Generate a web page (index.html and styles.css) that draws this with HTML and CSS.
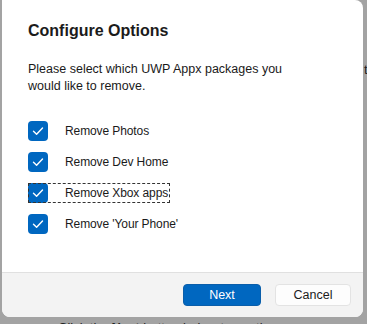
FILE: index.html
```html
<!DOCTYPE html>
<html lang="en">
  <head>
    <meta charset="UTF-8" />
    <meta name="viewport" content="width=device-width, initial-scale=1.0" />
    <title>Configure Options</title>
    <link rel="stylesheet" href="styles.css">
  </head>
  <body>
    <span class="behind-t">t</span>

    <div class="dialog">
      <div class="dialog-body">
        <h1>Configure Options</h1>
        <p class="intro">Please select which UWP Appx packages you would like to remove.</p>

        <ul class="options">
          <li class="option">
            <span class="check"><svg viewBox="0 0 20 20"><path d="M5.5 10.3 L8.6 13.3 L14.5 7" /></svg></span>
            <span class="label">Remove Photos</span>
          </li>
          <li class="option">
            <span class="check"><svg viewBox="0 0 20 20"><path d="M5.5 10.3 L8.6 13.3 L14.5 7" /></svg></span>
            <span class="label">Remove Dev Home</span>
          </li>
          <li class="option focused">
            <span class="check"><svg viewBox="0 0 20 20"><path d="M5.5 10.3 L8.6 13.3 L14.5 7" /></svg></span>
            <span class="label">Remove Xbox apps</span>
          </li>
          <li class="option">
            <span class="check"><svg viewBox="0 0 20 20"><path d="M5.5 10.3 L8.6 13.3 L14.5 7" /></svg></span>
            <span class="label">Remove 'Your Phone'</span>
          </li>
        </ul>
      </div>

      <div class="dialog-footer">
        <button class="btn btn-primary">Next</button>
        <button class="btn btn-secondary">Cancel</button>
      </div>
    </div>

    <p class="behind-text">Click the <b>Next</b> button below to continue</p>
  </body>
</html>
```

FILE: styles.css
```css
body {
  margin: 0;
  padding: 0;
  background: #a3a3a3;
  font-family: "Liberation Sans", Arial, sans-serif;
  color: #1a1a1a;
  overflow: hidden;
  position: relative;
  height: 324px;
}

.dialog {
  margin-left: 2px;
  width: 361px;
  height: 317px;
  background: #fff;
  border-radius: 0 8px 8px 8px;
  display: flex;
  flex-direction: column;
  overflow: hidden;
  position: relative;
  z-index: 1;
}

.dialog-body {
  flex: 1;
  padding: 19px 26px 0 26px;
}

.dialog-body h1 {
  margin: 0;
  font-size: 16px;
  line-height: 24px;
  font-weight: 700;
  color: #1b1b1b;
}

.intro {
  margin: 18px 0 26px 0;
  font-size: 12.5px;
  line-height: 17px;
  width: 275px;
}

.options {
  list-style: none;
  margin: 0;
  padding: 0;
  display: flex;
  flex-direction: column;
  gap: 11px;
}

.option {
  display: flex;
  align-items: center;
  gap: 17px;
  font-size: 12px;
  letter-spacing: -0.1px;
  height: 20px;
  width: max-content;
  padding-right: 2px;
}

.check {
  width: 20px;
  height: 20px;
  border-radius: 4px;
  background: #0067c0;
  display: flex;
}

.check svg {
  width: 20px;
  height: 20px;
  fill: none;
  stroke: #fff;
  stroke-width: 1.4;
  stroke-linecap: round;
  stroke-linejoin: round;
}

.option.focused {
  outline: 1px dashed #333;
  outline-offset: -1px;
}

.dialog-footer {
  height: 44px;
  background: #f3f3f3;
  border-top: 1px solid #e0e0e0;
  display: flex;
  align-items: center;
  justify-content: flex-end;
  gap: 14px;
  padding-right: 12px;
}

.btn {
  font-family: inherit;
  font-size: 12.5px;
  height: 22px;
  border-radius: 4px;
  cursor: pointer;
}

.btn-primary {
  width: 78px;
  background: #0067c0;
  color: #fff;
  border: 1px solid #0a5eaa;
}

.btn-secondary {
  width: 76px;
  background: #fdfdfd;
  color: #1b1b1b;
  border: 1px solid #e3e3e3;
}

.behind-text {
  margin: 0 0 0 58px;
  padding-top: 3px;
  font-size: 13px;
  color: #222;
}

.behind-t {
  position: absolute;
  left: 364px;
  top: 62px;
  font-size: 13px;
  color: #222;
}
```
